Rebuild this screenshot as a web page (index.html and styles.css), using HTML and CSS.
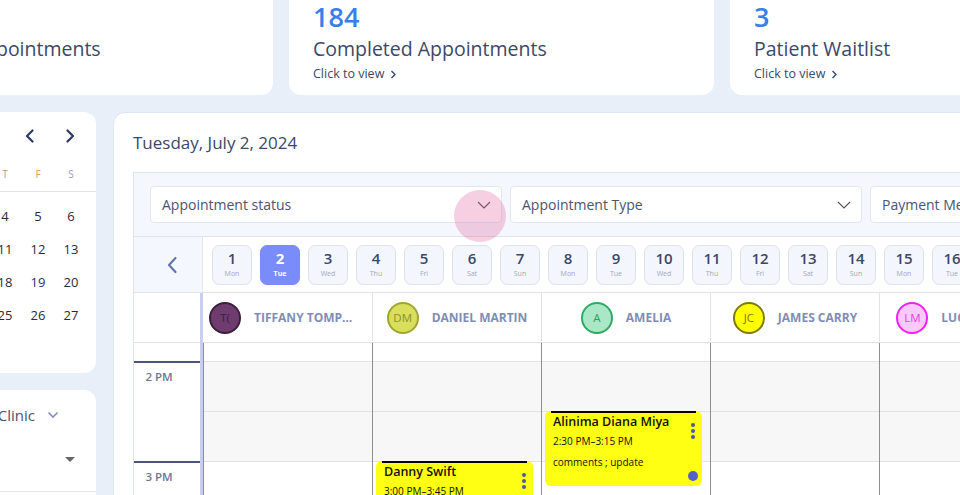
FILE: index.html
```html
<!DOCTYPE html>
<html>
<head>
<meta charset="utf-8">
<link rel="stylesheet" href="styles.css">
</head>
<body>
<div class="page">
  <div class="stats">
    <div class="stat-card">
      <div class="stat-num">212</div>
      <div class="stat-title">Scheduled Appointments</div>
      <div class="stat-link">Click to view <svg width="8" height="9" viewBox="0 0 8 9"><path d="M2.5 1 L6 4.5 L2.5 8" fill="none" stroke="#3b4868" stroke-width="1.4"/></svg></div>
    </div>
    <div class="stat-card">
      <div class="stat-num">184</div>
      <div class="stat-title">Completed Appointments</div>
      <div class="stat-link">Click to view <svg width="8" height="9" viewBox="0 0 8 9"><path d="M2.5 1 L6 4.5 L2.5 8" fill="none" stroke="#3b4868" stroke-width="1.4"/></svg></div>
    </div>
    <div class="stat-card">
      <div class="stat-num">3</div>
      <div class="stat-title">Patient Waitlist</div>
      <div class="stat-link">Click to view <svg width="8" height="9" viewBox="0 0 8 9"><path d="M2.5 1 L6 4.5 L2.5 8" fill="none" stroke="#3b4868" stroke-width="1.4"/></svg></div>
    </div>
  </div>

  <div class="main-row">
    <div class="side">
      <div class="mini-cal">
        <div class="mc-head">
          <span class="mc-month">July 2024</span>
          <span class="mc-arrows">
            <span class="mc-btn"><svg width="12" height="14" viewBox="0 0 12 14"><path d="M8.5 1.5 L3 7 L8.5 12.5" fill="none" stroke="#2b3766" stroke-width="2.2" stroke-linecap="round" stroke-linejoin="round"/></svg></span>
            <span class="mc-btn"><svg width="12" height="14" viewBox="0 0 12 14"><path d="M3.5 1.5 L9 7 L3.5 12.5" fill="none" stroke="#2b3766" stroke-width="2.2" stroke-linecap="round" stroke-linejoin="round"/></svg></span>
          </span>
        </div>
        <div class="mc-dow">
          <span>S</span><span>M</span><span>T</span><span>W</span><span>T</span><span class="fri">F</span><span>S</span>
        </div>
        <div class="mc-grid">
          <span></span><span>1</span><span class="sel">2</span><span>3</span><span>4</span><span>5</span><span>6</span>
          <span>7</span><span>8</span><span>9</span><span>10</span><span>11</span><span>12</span><span>13</span>
          <span>14</span><span>15</span><span>16</span><span>17</span><span>18</span><span class="blue">19</span><span>20</span>
          <span>21</span><span>22</span><span>23</span><span>24</span><span>25</span><span>26</span><span>27</span>
          <span>28</span><span>29</span><span>30</span><span>31</span><span></span><span></span><span></span>
        </div>
      </div>
      <div class="clinic-card">
        <div class="clinic-head">
          <span class="clinic-label">Select Clinic</span>
          <svg width="12" height="8" viewBox="0 0 12 8"><path d="M1.5 1.5 L6 6 L10.5 1.5" fill="none" stroke="#7f90c2" stroke-width="1.6"/></svg>
        </div>
        <div class="clinic-select">
          <span class="clinic-val">All</span>
          <svg width="10" height="5" viewBox="0 0 10 5"><path d="M0 0 L10 0 L5 5 Z" fill="#666"/></svg>
        </div>
      </div>
    </div>

    <div class="panel">
      <div class="panel-title">Tuesday, July 2, 2024</div>
      <div class="sched">
        <div class="filters">
          <div class="select">
            <span>Appointment status</span>
            <svg width="14" height="8" viewBox="0 0 14 8"><path d="M1 1 L7 7 L13 1" fill="none" stroke="#555" stroke-width="1.1"/></svg>
            <span class="ripple"></span>
          </div>
          <div class="select">
            <span>Appointment Type</span>
            <svg width="14" height="8" viewBox="0 0 14 8"><path d="M1 1 L7 7 L13 1" fill="none" stroke="#555" stroke-width="1.1"/></svg>
          </div>
          <div class="select">
            <span>Payment Method</span>
            <svg width="14" height="8" viewBox="0 0 14 8"><path d="M1 1 L7 7 L13 1" fill="none" stroke="#555" stroke-width="1.1"/></svg>
          </div>
        </div>

        <div class="dates">
          <div class="dates-nav"><svg width="12" height="18" viewBox="0 0 12 18"><path d="M9.5 2 L3 9 L9.5 16" fill="none" stroke="#6577a6" stroke-width="2.2" stroke-linecap="round" stroke-linejoin="round"/></svg></div>
          <div class="chips">
            <div class="chip"><b>1</b><small>Mon</small></div>
            <div class="chip active"><b>2</b><small>Tue</small></div>
            <div class="chip"><b>3</b><small>Wed</small></div>
            <div class="chip"><b>4</b><small>Thu</small></div>
            <div class="chip"><b>5</b><small>Fri</small></div>
            <div class="chip"><b>6</b><small>Sat</small></div>
            <div class="chip"><b>7</b><small>Sun</small></div>
            <div class="chip"><b>8</b><small>Mon</small></div>
            <div class="chip"><b>9</b><small>Tue</small></div>
            <div class="chip"><b>10</b><small>Wed</small></div>
            <div class="chip"><b>11</b><small>Thu</small></div>
            <div class="chip"><b>12</b><small>Fri</small></div>
            <div class="chip"><b>13</b><small>Sat</small></div>
            <div class="chip"><b>14</b><small>Sun</small></div>
            <div class="chip"><b>15</b><small>Mon</small></div>
            <div class="chip"><b>16</b><small>Tue</small></div>
            <div class="chip"><b>17</b><small>Wed</small></div>
          </div>
        </div>

        <div class="grid">
          <div class="time-col">
            <div class="head-cell"></div>
            <div class="spacer"></div>
            <div class="hour">2 PM</div>
            <div class="hour">3 PM</div>
          </div>

          <div class="staff-col">
            <div class="staff-head first">
              <span class="avatar av-t">T(</span>
              <span class="staff-name trunc">TIFFANY TOMPSON</span>
            </div>
            <div class="body">
              <div class="spacer"></div>
              <div class="slot shade"></div><div class="slot shade"></div><div class="slot"></div><div class="slot"></div>
            </div>
          </div>

          <div class="staff-col">
            <div class="staff-head">
              <span class="avatar av-dm">DM</span>
              <span class="staff-name">DANIEL MARTIN</span>
            </div>
            <div class="body">
              <div class="spacer"></div>
              <div class="slot shade"></div><div class="slot shade"></div><div class="slot"></div><div class="slot"></div>
              <div class="event ev-danny">
                <div class="ev-title">Danny Swift</div>
                <div class="ev-time">3:00 PM–3:45 PM</div>
                <span class="dots"><i></i><i></i><i></i></span>
              </div>
            </div>
          </div>

          <div class="staff-col">
            <div class="staff-head">
              <span class="avatar av-a">A</span>
              <span class="staff-name">AMELIA</span>
            </div>
            <div class="body">
              <div class="spacer"></div>
              <div class="slot shade"></div><div class="slot shade"></div><div class="slot"></div><div class="slot"></div>
              <div class="event ev-alinima">
                <div class="ev-title">Alinima Diana Miya</div>
                <div class="ev-time">2:30 PM–3:15 PM</div>
                <div class="ev-note">comments ; update</div>
                <span class="dots"><i></i><i></i><i></i></span>
                <span class="status-dot"></span>
              </div>
            </div>
          </div>

          <div class="staff-col">
            <div class="staff-head">
              <span class="avatar av-jc">JC</span>
              <span class="staff-name">JAMES CARRY</span>
            </div>
            <div class="body">
              <div class="spacer"></div>
              <div class="slot shade"></div><div class="slot shade"></div><div class="slot"></div><div class="slot"></div>
            </div>
          </div>

          <div class="staff-col">
            <div class="staff-head">
              <span class="avatar av-lm">LM</span>
              <span class="staff-name">LUCIFER MORN</span>
            </div>
            <div class="body">
              <div class="spacer"></div>
              <div class="slot shade"></div><div class="slot shade"></div><div class="slot"></div><div class="slot"></div>
            </div>
          </div>
        </div>
      </div>
    </div>
  </div>
</div>
</body>
</html>
```

FILE: styles.css
```css
* { box-sizing: border-box; }
html, body { margin: 0; padding: 0; }
body {
  width: 960px;
  height: 495px;
  overflow: hidden;
  background: #e9eff9;
  font-family: "Open Sans", "Noto Sans", sans-serif;
  color: #3b4868;
}
.page {
  margin: -20px 0 0 -152px;
  width: 1400px;
}

/* stats */
.stats {
  display: grid;
  grid-template-columns: repeat(3, 425px);
  gap: 16px;
}
.stat-card {
  background: #fff;
  border-radius: 12px;
  padding: 20px 24px 11px;
}
.stat-num {
  font-size: 27px;
  font-weight: 600;
  line-height: 34px;
  color: #3680ee;
}
.stat-title {
  font-size: 19.5px;
  line-height: 26px;
  margin-top: 2px;
  color: #3b4868;
}
.stat-link {
  font-size: 12.5px;
  line-height: 20px;
  margin-top: 2px;
  color: #3b4868;
  display: flex;
  align-items: center;
  gap: 5px;
}

/* main row */
.main-row {
  display: flex;
  gap: 17px;
  margin-top: 17px;
  align-items: flex-start;
}
.side {
  width: 248px;
  flex: none;
  display: flex;
  flex-direction: column;
  gap: 17px;
}
.mini-cal {
  background: #fff;
  border-radius: 12px;
  height: 261px;
}
.mc-head {
  height: 48px;
  display: flex;
  align-items: center;
  justify-content: space-between;
  padding: 0 14px 0 16px;
}
.mc-month { font-size: 14px; font-weight: 600; }
.mc-arrows { display: flex; gap: 16px; }
.mc-btn {
  width: 24px; height: 24px;
  display: flex; align-items: center; justify-content: center;
}
.mc-dow {
  display: grid;
  grid-template-columns: repeat(7, 33px);
  padding: 0 8.5px 4px;
  border-bottom: 1px solid #e3e3e3;
  height: 32px;
}
.mc-dow span {
  text-align: center;
  line-height: 28px;
  font-size: 10px;
  color: #9aa0ab;
}
.mc-dow .fri { color: #c9a16b; }
.mc-grid {
  display: grid;
  grid-template-columns: repeat(7, 33px);
  grid-auto-rows: 33px;
  padding: 7px 8.5px 0;
}
.mc-grid span {
  display: flex; align-items: center; justify-content: center;
  font-size: 13px;
  color: #2a2a3a;
}
.mc-grid .blue { color: #2b2c7a; }
.mc-grid .sel { color: #fff; background: #7a8cf9; border-radius: 50%; }

.clinic-card {
  background: #fff;
  border-radius: 12px;
  height: 140px;
}
.clinic-head {
  height: 50px;
  display: flex;
  align-items: center;
  justify-content: flex-end;
  gap: 12px;
  padding-right: 37px;
}
.clinic-label { font-size: 15px; color: #4a5470; }
.clinic-select {
  margin: 0 0 0 16px;
  height: 52px;
  display: flex;
  align-items: flex-start;
  justify-content: space-between;
  padding: 17px 21px 0 0;
  border-bottom: 1px solid #e2e4ea;
}
.clinic-val { font-size: 14px; color: #333; line-height: 5px; }

/* panel */
.panel {
  flex: 1;
  background: #fff;
  border-radius: 12px;
  border: 1px solid #dde4f3;
  padding: 19px 0 0 19px;
  height: 420px;
  overflow: hidden;
}
.panel-title {
  font-size: 17px;
  font-weight: 500;
  line-height: 22px;
  color: #3b4868;
}
.sched {
  margin-top: 18px;
  border: 1px solid #dfe3ea;
  border-right: none;
}
.filters {
  background: #f4f7fd;
  padding: 13px 16px;
  display: flex;
  gap: 8px;
  border-bottom: 1px solid #e0e3ea;
}
.select {
  position: relative;
  width: 352px;
  flex: none;
  height: 37px;
  background: #fff;
  border: 1px solid #e3e6ee;
  border-radius: 4px;
  display: flex;
  align-items: center;
  justify-content: space-between;
  padding: 0 10px 0 11px;
  font-size: 14px;
  color: #4a5470;
}
.ripple {
  position: absolute;
  left: 303px;
  top: 3px;
  width: 52px;
  height: 52px;
  border-radius: 50%;
  background: rgba(222, 80, 148, 0.27);
}

.dates {
  display: flex;
  height: 56px;
  border-bottom: 1px solid #e0e3ea;
}
.dates-nav {
  width: 69px;
  flex: none;
  background: #f4f7fd;
  border-right: 1px solid #e3e6ec;
  display: flex;
  align-items: center;
  justify-content: center;
  padding-left: 8px;
}
.chips {
  display: flex;
  gap: 8px;
  padding: 8px 0 0 9px;
}
.chip {
  width: 40px;
  height: 40px;
  flex: none;
  border: 1px solid #dde2ee;
  background: #f3f6fd;
  border-radius: 7px;
  display: flex;
  flex-direction: column;
  align-items: center;
  padding-top: 3px;
}
.chip b {
  font-size: 15px;
  line-height: 19px;
  font-weight: 600;
  color: #3b4868;
}
.chip small {
  font-size: 7px;
  line-height: 12px;
  color: #a0a8bc;
}
.chip.active {
  background: #7a8cf9;
  border-color: #7a8cf9;
}
.chip.active b, .chip.active small { color: #fff; font-weight: 700; }

/* grid */
.grid {
  display: flex;
}
.time-col {
  width: 69px;
  flex: none;
  border-right: 3px solid #c8cdf4;
}
.head-cell {
  height: 50px;
  border-bottom: 1px solid #e2e2e2;
}
.spacer { height: 18px; }
.hour {
  height: 100px;
  border-top: 2px solid #4b5578;
  padding: 6px 16px 0 0;
  text-align: center;
  font-size: 11.5px;
  font-weight: 600;
  line-height: 16px;
  color: #6c7694;
}
.staff-col {
  width: 169px;
  flex: none;
}
.staff-head {
  height: 50px;
  border-bottom: 1px solid #e2e2e2;
  border-left: 1px solid #e2e2e2;
  display: flex;
  align-items: center;
  justify-content: center;
  gap: 13px;
}
.staff-head.first { border-left: none; padding-right: 8px; }
.avatar {
  width: 32px;
  height: 32px;
  flex: none;
  border-radius: 50%;
  border: 2px solid;
  display: flex;
  align-items: center;
  justify-content: center;
  font-size: 11.5px;
}
.av-t { background: #6e3c6e; border-color: #3b1e3d; color: #3b2240; }
.av-dm { background: #d8df5c; border-color: #a0a530; color: #8c902c; }
.av-a { background: #a9e7c6; border-color: #2daa63; color: #2e9f5d; }
.av-jc { background: #ffff00; border-color: #7c7a10; color: #7c7a10; }
.av-lm { background: #ffc8ff; border-color: #f020f0; color: #e23ae2; }
.staff-name {
  font-size: 12px;
  font-weight: 700;
  color: #7f8db5;
  white-space: nowrap;
}
.trunc {
  max-width: 104px;
  overflow: hidden;
  text-overflow: ellipsis;
}
.body {
  position: relative;
  border-left: 1px solid #8e8e8e;
}
.slot {
  height: 50px;
  border-top: 1px solid #e2e2e2;
}
.slot.shade { background: #f7f7f7; }

.event {
  position: absolute;
  left: 3px;
  right: 8px;
  height: 75px;
  background: #ffff14;
  border-radius: 6px;
  padding: 3px 8px 0;
  color: #111;
}
.event::before {
  content: "";
  position: absolute;
  top: 0;
  left: 6px;
  right: 6px;
  height: 2px;
  background: #000;
}
.ev-danny { top: 118px; }
.ev-alinima { top: 68px; }
.ev-title {
  font-size: 12.5px;
  font-weight: 600;
  line-height: 16px;
}
.ev-time {
  font-size: 10px;
  line-height: 14px;
  margin-top: 4px;
}
.ev-note {
  font-size: 10px;
  line-height: 14px;
  margin-top: 7px;
}
.dots {
  position: absolute;
  right: 7px;
  top: 12px;
  display: flex;
  flex-direction: column;
  gap: 2px;
}
.dots i {
  width: 4px;
  height: 4px;
  border-radius: 50%;
  background: #4a57a3;
}
.status-dot {
  position: absolute;
  right: 4px;
  bottom: 5px;
  width: 10px;
  height: 10px;
  border-radius: 50%;
  background: #5460c4;
}
```
